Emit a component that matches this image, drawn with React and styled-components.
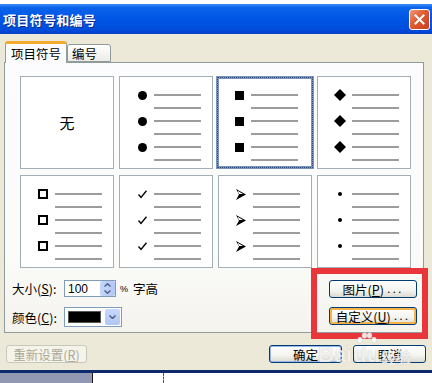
import React from 'react';
import styled, { createGlobalStyle } from 'styled-components';

const Global = createGlobalStyle`
  html, body { margin: 0; padding: 0; background: #fff; }
  body {
    width: 432px; height: 383px; overflow: hidden;
    font-family: "Noto Sans CJK SC", "Liberation Sans", sans-serif;
    font-size: 12px; color: #000;
  }
`;

const Screen = styled.div`
  display: flex;
  flex-direction: column;
  width: 432px;
  height: 383px;
  position: relative;
`;

const TopGap = styled.div`
  height: 4px;
  background: #fff;
`;

const Window = styled.div`
  height: 366px;
  display: flex;
  flex-direction: column;
  background: #ece9d8;
`;

const TitleBar = styled.div`
  height: 30px;
  display: flex;
  align-items: center;
  justify-content: space-between;
  padding: 0 2px 0 3px;
  background: linear-gradient(#3d8ef8 0%, #0c63ea 12%, #0057e6 45%, #004ddc 85%, #003fc8 100%);
  color: #fff;
  font-weight: bold;
  font-size: 13px;
  letter-spacing: 0.3px;
  text-shadow: 1px 1px 0 #0a2a8c;
`;

const CloseButton = styled.div`
  width: 19px;
  height: 19px;
  margin-top: 1px;
  border: 1px solid #fff;
  border-radius: 3px;
  background: linear-gradient(135deg, #f09a7c 0%, #e05a32 45%, #c8401e 100%);
  display: flex;
  align-items: center;
  justify-content: center;
`;

const Body = styled.div`
  flex: 1;
  display: flex;
  flex-direction: column;
  padding: 7px 0 0 4px;
`;

const TabRow = styled.div`
  display: flex;
  align-items: flex-end;
  padding-left: 1px;
  height: 21px;
`;

const Tab = styled.div`
  position: relative;
  z-index: ${p => (p.$active ? 1 : 0)};
  box-sizing: border-box;
  width: ${p => p.$w}px;
  height: ${p => (p.$active ? 22 : 18)}px;
  margin-bottom: ${p => (p.$active ? -1 : 0)}px;
  border: 1px solid #919b9c;
  border-bottom: ${p => (p.$active ? 'none' : '1px solid #919b9c')};
  border-top: ${p => (p.$active ? '3px solid #f5a92e' : '1px solid #919b9c')};
  border-radius: 3px 3px 0 0;
  background: ${p => (p.$active ? '#fcfcfe' : 'linear-gradient(#ffffff, #ecebe6)')};
  display: flex;
  align-items: center;
  justify-content: ${p => (p.$active ? 'center' : 'flex-start')};
  padding-left: ${p => (p.$active ? 0 : 4)}px;
  font-size: 12.5px;
`;

const Panel = styled.div`
  box-sizing: border-box;
  height: 271px;
  margin-right: 8px;
  border: 1px solid #919b9c;
  background: linear-gradient(#fcfcfe 0%, #fbfbf9 70%, #f4f3ee 100%);
  display: flex;
  flex-direction: column;
`;

const BulletGrid = styled.div`
  display: grid;
  grid-template-columns: repeat(4, 94px);
  grid-auto-rows: 93px;
  column-gap: 5px;
  row-gap: 6px;
  padding: 13px 0 0 15px;
`;

const Cell = styled.div`
  box-sizing: border-box;
  background: #fff;
  border: ${p => (p.$selected ? '3px solid #7b93b8' : '1px solid #a3afb5')};
  outline: ${p => (p.$selected ? '1px dotted #2f4c82' : 'none')};
  outline-offset: -2px;
  display: flex;
  flex-direction: column;
  gap: 11px;
  padding: ${p => (p.$selected ? '15px 0 0 8px' : '17px 0 0 10px')};
  margin: ${p => (p.$selected ? '0 -2px' : '0')};
`;

const NoneCell = styled(Cell)`
  align-items: center;
  justify-content: center;
  padding: 0;
  font-size: 15px;
`;

const ListRow = styled.div`
  display: flex;
  align-items: center;
  height: 2px;
`;

const MarkerSlot = styled.div`
  width: 24px;
  height: 2px;
  display: flex;
  align-items: center;
  justify-content: center;
`;

const Line = styled.div`
  width: 47px;
  height: 2px;
  background: #9c9c9c;
`;

const Dot = styled.div`
  width: ${p => p.$size}px;
  height: ${p => p.$size}px;
  border-radius: 50%;
  background: #000;
  flex-shrink: 0;
`;

const Square = styled.div`
  box-sizing: border-box;
  width: ${p => (p.$hollow ? 10 : 9)}px;
  height: ${p => (p.$hollow ? 10 : 9)}px;
  background: ${p => (p.$hollow ? '#fff' : '#000')};
  border: ${p => (p.$hollow ? '2px solid #000' : 'none')};
  flex-shrink: 0;
`;

const Controls = styled.div`
  display: flex;
  justify-content: space-between;
  padding: 12px 6px 0 7px;
`;

const FieldColumn = styled.div`
  display: flex;
  flex-direction: column;
  gap: 10px;
`;

const FieldRow = styled.div`
  display: flex;
  align-items: center;
  height: ${p => p.$h}px;
`;

const Label = styled.span`
  width: 52px;
  font-size: 12.5px;
`;

const SpinBox = styled.div`
  box-sizing: border-box;
  width: 52px;
  height: 17px;
  border: 1px solid #7f9db9;
  background: #fff;
  display: flex;
  align-items: center;
  justify-content: space-between;
  padding-left: 3px;
  font-family: "Liberation Sans", sans-serif;
  font-size: 12px;
`;

const SpinButtons = styled.div`
  width: 15px;
  height: 15px;
  border-radius: 2px;
  background: linear-gradient(90deg, #c6d6fb, #b4c8f6);
  display: flex;
  align-items: center;
  justify-content: center;
`;

const Unit = styled.span`
  margin-left: 4px;
  font-size: 12.5px;
  display: flex;
  align-items: center;
  gap: 5px;
`;

const Percent = styled.span`
  font-family: "Liberation Sans", sans-serif;
  font-size: 9px;
`;

const ColorCombo = styled.div`
  box-sizing: border-box;
  width: 58px;
  height: 20px;
  border: 1px solid #7f9db9;
  background: #fff;
  display: flex;
  align-items: center;
  justify-content: space-between;
  padding: 0 1px 0 3px;
`;

const Swatch = styled.div`
  width: 31px;
  height: 10px;
  background: #000;
  border: 1px solid #555;
`;

const DropButton = styled.div`
  width: 15px;
  height: 16px;
  border-radius: 2px;
  background: linear-gradient(#c8d8fc, #b2c6f5);
  display: flex;
  align-items: center;
  justify-content: center;
`;

const ButtonColumn = styled.div`
  display: flex;
  flex-direction: column;
  gap: 9px;
`;

const XPButton = styled.div`
  box-sizing: border-box;
  width: ${p => p.$w}px;
  height: 18px;
  border: 1px solid ${p => (p.$disabled ? '#c9c7ba' : '#003c74')};
  border-radius: 3px;
  background: ${p => (p.$disabled ? '#f5f4ea' : 'linear-gradient(#ffffff 0%, #f3f3ef 60%, #dcdad0 100%)')};
  box-shadow: ${p => (p.$hover ? 'inset 0 0 0 2px #f8b348' : p.$focus ? 'inset 0 0 0 1px #98b8ea' : 'none')};
  color: ${p => (p.$disabled ? '#aca899' : '#000')};
  display: flex;
  align-items: center;
  justify-content: center;
  font-size: 12.5px;
  white-space: nowrap;
`;

const Dots = styled.span`
  font-family: "Liberation Sans", sans-serif;
  margin-left: 3px;
  letter-spacing: 2px;
`;

const BottomRow = styled.div`
  display: flex;
  justify-content: space-between;
  align-items: center;
  padding: 12px 6px 0 2px;
`;

const RightButtons = styled.div`
  display: flex;
  gap: 11px;
`;

const Desktop = styled.div`
  flex: 1;
  display: flex;
  border-top: 3px solid #0c2a6c;
  background: #fff;
`;

const DesktopPane = styled.div`
  width: 92px;
  background: #9298b2;
  border-right: 1px solid #1a1a1a;
`;

const DottedRule = styled.div`
  width: 0;
  margin-left: 70px;
  border-left: 1px dashed #555;
`;

const Annotation = styled.div`
  position: absolute;
  left: 311px;
  top: 268px;
  width: 117px;
  height: 71px;
  box-sizing: border-box;
  border: 6px solid #e8363b;
  pointer-events: none;
`;

const Watermark = styled.div`
  position: absolute;
  left: 318px;
  top: 332px;
  display: flex;
  align-items: flex-end;
  gap: 1px;
  color: rgba(255, 255, 255, 0.78);
  text-shadow: 0 0 1px rgba(120, 120, 120, 0.45);
  font-family: "Liberation Sans", sans-serif;
  font-weight: bold;
  font-size: 22px;
  line-height: 1;
  pointer-events: none;
`;

const PawWord = styled.div`
  display: flex;
  flex-direction: column;
  align-items: center;
`;

const WatermarkSmall = styled.span`
  font-size: 15px;
  font-family: "Noto Sans CJK SC", sans-serif;
  margin-bottom: 2px;
`;

const U = styled.span`
  text-decoration: underline;
`;

function Key({ children }) {
  return (
    <>
      (<U>{children}</U>)
    </>
  );
}

function Check() {
  return (
    <svg width="9" height="9" viewBox="0 0 9 9">
      <path d="M0.5 4.5 L3 7.5 L8.5 0.8" fill="none" stroke="#000" strokeWidth="1.4" />
    </svg>
  );
}

function Arrow() {
  return (
    <svg width="10" height="11" viewBox="0 0 10 11">
      <polygon points="0,0 10,5.5 0,11 3,5.5" fill="#000" />
      <polygon points="1.5,1.8 7,5 3,5" fill="#fff" />
    </svg>
  );
}

function Diamond() {
  return (
    <svg width="12" height="12" viewBox="0 0 12 12">
      <polygon points="6,0 12,6 6,12 0,6" fill="#000" />
    </svg>
  );
}

function Paw() {
  return (
    <svg width="22" height="12" viewBox="0 0 22 12">
      <g fill="rgba(255,255,255,0.85)" stroke="rgba(150,150,150,0.35)" strokeWidth="0.6">
        <ellipse cx="4" cy="8" rx="2.6" ry="3" />
        <ellipse cx="8.5" cy="3.5" rx="2.6" ry="3" />
        <ellipse cx="13.5" cy="3.5" rx="2.6" ry="3" />
        <ellipse cx="18" cy="8" rx="2.6" ry="3" />
      </g>
    </svg>
  );
}

function Chevron({ up }) {
  return (
    <svg width="7" height="4" viewBox="0 0 7 4">
      <path d={up ? 'M0.5 3.5 L3.5 0.5 L6.5 3.5' : 'M0.5 0.5 L3.5 3.5 L6.5 0.5'} fill="none" stroke="#4d6185" strokeWidth="1.5" />
    </svg>
  );
}

const markers = [
  () => <Dot $size={9} />,
  () => <Square />,
  () => <Diamond />,
  () => <Square $hollow />,
  () => <Check />,
  () => <Arrow />,
  () => <Dot $size={4} />,
];

function BulletCell({ marker: Marker, selected }) {
  const rows = [];
  for (let i = 0; i < 3; i++) {
    rows.push(
      <ListRow key={'m' + i}>
        <MarkerSlot><Marker /></MarkerSlot>
        <Line />
      </ListRow>
    );
    rows.push(
      <ListRow key={'l' + i}>
        <MarkerSlot />
        <Line />
      </ListRow>
    );
  }
  return <Cell $selected={selected}>{rows}</Cell>;
}

export default function App() {
  return (
    <Screen>
      <Global />
      <TopGap />
      <Window>
        <TitleBar>
          <span>项目符号和编号</span>
          <CloseButton>
            <svg width="11" height="11" viewBox="0 0 11 11">
              <path d="M1.5 1.5 L9.5 9.5 M9.5 1.5 L1.5 9.5" stroke="#fff" strokeWidth="2" strokeLinecap="square" />
            </svg>
          </CloseButton>
        </TitleBar>
        <Body>
          <TabRow>
            <Tab $active $w={62}>项目符号</Tab>
            <Tab $w={44}>编号</Tab>
          </TabRow>
          <Panel>
            <BulletGrid>
              <NoneCell>无</NoneCell>
              {markers.map((m, i) => (
                <BulletCell key={i} marker={m} selected={i === 1} />
              ))}
            </BulletGrid>
            <Controls>
              <FieldColumn>
                <FieldRow $h={17}>
                  <Label>大小<Key>S</Key>:</Label>
                  <SpinBox>
                    100
                    <SpinButtons>
                      <svg width="7" height="11" viewBox="0 0 7 11">
                        <path d="M0.5 3.5 L3.5 0.8 L6.5 3.5 M0.5 7.5 L3.5 10.2 L6.5 7.5" fill="none" stroke="#4d6185" strokeWidth="1.5" />
                      </svg>
                    </SpinButtons>
                  </SpinBox>
                  <Unit><Percent>%</Percent>字高</Unit>
                </FieldRow>
                <FieldRow $h={20}>
                  <Label>颜色<Key>C</Key>:</Label>
                  <ColorCombo>
                    <Swatch />
                    <DropButton><Chevron /></DropButton>
                  </ColorCombo>
                </FieldRow>
              </FieldColumn>
              <ButtonColumn>
                <XPButton $w={88}>图片<Key>P</Key><Dots>...</Dots></XPButton>
                <XPButton $w={88} $hover>自定义<Key>U</Key><Dots>...</Dots></XPButton>
              </ButtonColumn>
            </Controls>
          </Panel>
          <BottomRow>
            <XPButton $w={81} $disabled>重新设置<Key>R</Key></XPButton>
            <RightButtons>
              <XPButton $w={73} $focus>确定</XPButton>
              <XPButton $w={73}>取消</XPButton>
            </RightButtons>
          </BottomRow>
        </Body>
      </Window>
      <Desktop>
        <DesktopPane />
        <DottedRule />
      </Desktop>
      <Annotation />
      <Watermark>
        <span>Bai</span>
        <PawWord>
          <Paw />
          <span>du</span>
        </PawWord>
        <WatermarkSmall>经验</WatermarkSmall>
      </Watermark>
    </Screen>
  );
}
